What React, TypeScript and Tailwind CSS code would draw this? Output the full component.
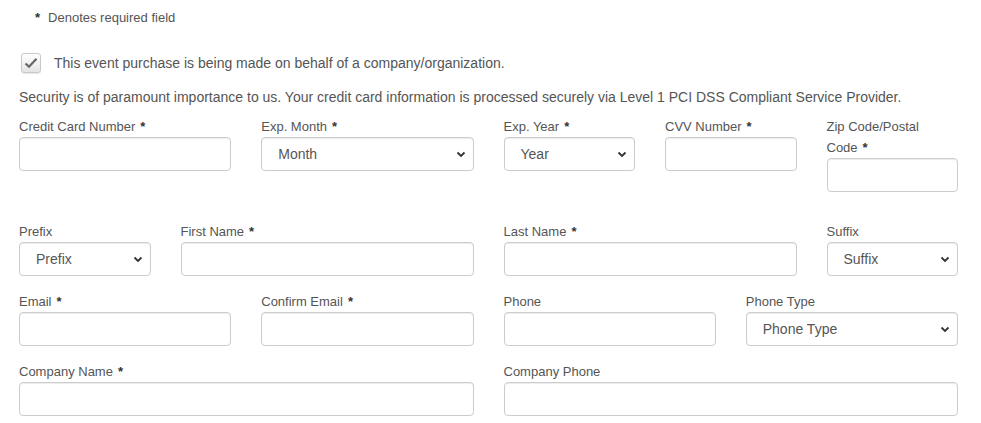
import React from "react";

type Field = {
  label: string;
  required?: boolean;
  span: string;
  select?: string;
  wrap?: boolean;
};

const rows: Field[][] = [
  [
    { label: "Credit Card Number", required: true, span: "col-span-3" },
    { label: "Exp. Month", required: true, span: "col-span-3", select: "Month" },
    { label: "Exp. Year", required: true, span: "col-span-2", select: "Year" },
    { label: "CVV Number", required: true, span: "col-span-2" },
    { label: "Zip Code/Postal Code", required: true, span: "col-span-2", wrap: true },
  ],
  [
    { label: "Prefix", span: "col-span-2", select: "Prefix" },
    { label: "First Name", required: true, span: "col-span-4" },
    { label: "Last Name", required: true, span: "col-span-4" },
    { label: "Suffix", span: "col-span-2", select: "Suffix" },
  ],
  [
    { label: "Email", required: true, span: "col-span-3" },
    { label: "Confirm Email", required: true, span: "col-span-3" },
    { label: "Phone", span: "col-span-3" },
    { label: "Phone Type", span: "col-span-3", select: "Phone Type" },
  ],
  [
    { label: "Company Name", required: true, span: "col-span-6" },
    { label: "Company Phone", span: "col-span-6" },
  ],
];

function Star() {
  return <span className="ml-[5px] font-bold text-[#333]">*</span>;
}

function Chevron() {
  return (
    <svg width="10" height="7" viewBox="0 0 10 7" className="pointer-events-none absolute right-[8px] top-[14px]">
      <path d="M1.5 1.5 L5 5 L8.5 1.5" fill="none" stroke="#333" strokeWidth="1.8" />
    </svg>
  );
}

function FormField({ f }: { f: Field }) {
  return (
    <div className={f.span}>
      <label className={`block text-[13px] leading-[21px] text-[#555] ${f.wrap ? "pr-[20px]" : ""}`}>
        {f.label}
        {f.required && <Star />}
      </label>
      {f.select ? (
        <div className="relative">
          <select
            defaultValue=""
            className="h-[34px] w-full appearance-none rounded-[4px] border border-[#ccc] bg-white pl-[16px] text-[14px] text-[#555] shadow-[inset_0_1px_1px_rgba(0,0,0,0.075)]"
          >
            <option value="">{f.select}</option>
          </select>
          <Chevron />
        </div>
      ) : (
        <input
          type="text"
          className="block h-[34px] w-full rounded-[4px] border border-[#ccc] bg-white px-3 text-[14px] text-[#555] shadow-[inset_0_1px_1px_rgba(0,0,0,0.075)]"
        />
      )}
    </div>
  );
}

export default function App() {
  return (
    <div
      className="h-[423px] w-[981px] overflow-hidden bg-white text-[#555]"
      style={{ fontFamily: '"Liberation Sans", Arial, sans-serif' }}
    >
      <div className="pl-[19px] pt-[8px]">
        <p className="pl-[16px] text-[13px] leading-[20px]">
          <span className="font-bold text-[#333]">*</span>
          <span className="ml-[8px]">Denotes required field</span>
        </p>

        <div className="mt-[24px] flex items-center">
          <span className="ml-[2px] flex h-[20px] w-[20px] items-center justify-center rounded-[3px] border border-[#c8c8c8] bg-gradient-to-b from-white to-[#e4e4e4] shadow-[0_1px_1px_rgba(0,0,0,0.1)]">
            <svg width="14" height="12" viewBox="0 0 14 12">
              <path d="M1.5 6.5 L5 9.8 L12.5 1.8" fill="none" stroke="#666" strokeWidth="2.2" />
            </svg>
          </span>
          <span className="ml-[13px] text-[14px] leading-[22px]">
            This event purchase is being made on behalf of a company/organization.
          </span>
        </div>

        <p className="mt-[13px] text-[14px] leading-[20px]">
          Security is of paramount importance to us. Your credit card information is processed securely via Level 1 PCI DSS Compliant Service Provider.
        </p>

        <div className="mt-[9px] w-[939px]">
          {rows.map((row, i) => (
            <div
              key={i}
              className={`grid grid-cols-12 gap-x-[30px] ${i === 0 ? "mb-[29px]" : "mb-[15px]"}`}
            >
              {row.map((f) => (
                <FormField key={f.label} f={f} />
              ))}
            </div>
          ))}
        </div>
      </div>
    </div>
  );
}
